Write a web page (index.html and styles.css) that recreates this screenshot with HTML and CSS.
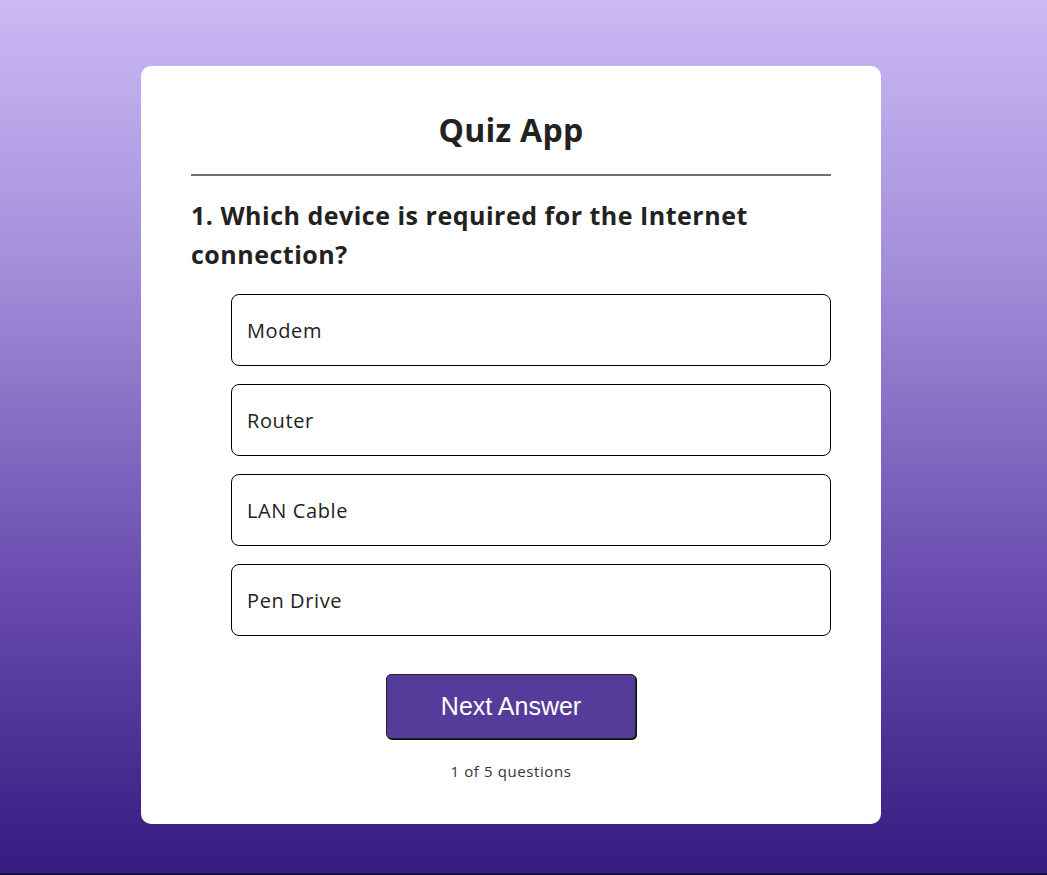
FILE: index.html
```html
<!DOCTYPE html>
<html lang="en">
<head>
<meta charset="utf-8">
<title>Quiz App</title>
<link rel="stylesheet" href="styles.css">
</head>
<body>
<main class="app">
  <h1 class="title">Quiz App</h1>
  <div class="quiz">
    <h2 class="question">1. Which device is required for the Internet connection?</h2>
    <div class="answers">
      <button class="answer">Modem</button>
      <button class="answer">Router</button>
      <button class="answer">LAN Cable</button>
      <button class="answer">Pen Drive</button>
    </div>
    <div class="actions">
      <button class="next">Next Answer</button>
    </div>
    <p class="progress">1 of 5 questions</p>
  </div>
</main>
</body>
</html>
```
FILE: styles.css
```css
* { box-sizing: border-box; }
html { background: #1b1140; }
body {
  margin: 0;
  height: 873px;
  background: linear-gradient(180deg, #cbbaf5 0%, #a48fda 30%, #6c4fb0 65%, #351a80 100%);
  font-family: "Open Sans", "Noto Sans", sans-serif;
  color: #222;
  display: flex;
  justify-content: flex-start;
  padding: 66px 0 0 141px;
}
.app {
  width: 740px;
  height: 758px;
  background: #fff;
  border-radius: 10px;
  padding: 38px 50px 0;
}
.title {
  margin: 0;
  text-align: center;
  font-size: 32px;
  font-weight: 700;
  line-height: 52px;
  padding-bottom: 18px;
  border-bottom: 2px solid #707070;
  letter-spacing: 0.3px;
}
.question {
  margin: 20px 0 0;
  font-size: 25px;
  font-weight: 700;
  line-height: 39px;
  letter-spacing: 0.5px;
}
.answers {
  margin: 20px 0 0 40px;
  display: flex;
  flex-direction: column;
  gap: 18px;
}
.answer {
  height: 72px;
  background: #fff;
  border: 1px solid #000;
  border-radius: 8px;
  text-align: left;
  padding: 0 15px;
  font-family: inherit;
  font-size: 20px;
  letter-spacing: 0.6px;
  color: #222;
}
.actions {
  display: flex;
  justify-content: center;
  margin-top: 38px;
}
.next {
  width: 250px;
  height: 65px;
  background: #553c9a;
  color: #fff;
  border: 1px solid #222;
  border-radius: 5px;
  box-shadow: 1px 1px 0 #111;
  font-family: "Liberation Sans", Arial, sans-serif;
  font-size: 25px;
}
.progress {
  margin: 22px 0 0;
  text-align: center;
  font-size: 15px;
  letter-spacing: 0.6px;
  color: #333;
}
```
